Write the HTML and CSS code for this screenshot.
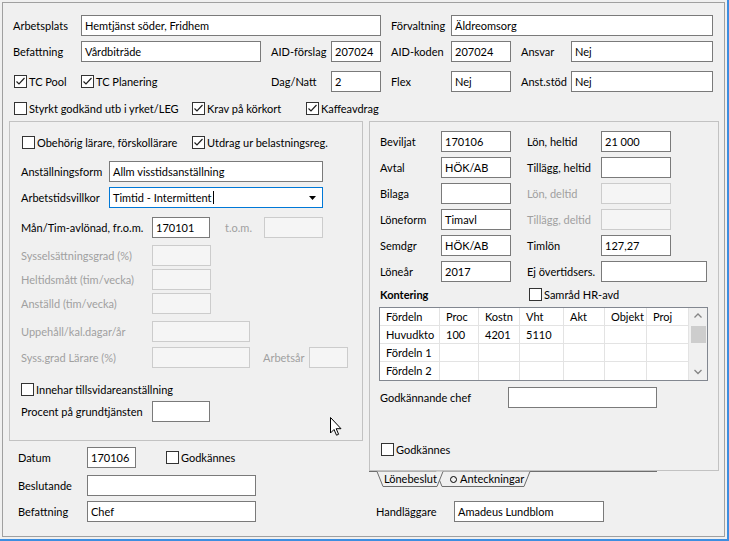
FILE: index.html
```html
<!DOCTYPE html>
<html lang="sv">
<head>
<meta charset="utf-8">
<title>Lönebeslut</title>
<link rel="stylesheet" href="styles.css">
</head>
<body>
<div class="window">
<div class="frame">
  <div class="top">
    <div class="row">
      <span class="lbl lw68">Arbetsplats</span>
      <div class="tb w300">Hemtjänst söder, Fridhem</div>
      <span class="lbl lw60 ml10">Förvaltning</span>
      <div class="tb w262">Äldreomsorg</div>
    </div>
    <div class="row mt5">
      <span class="lbl lw68">Befattning</span>
      <div class="tb w180">Vårdbiträde</div>
      <span class="lbl lw60 ml10">AID-förslag</span>
      <div class="tb w50">207024</div>
      <span class="lbl lw60 ml10">AID-koden</span>
      <div class="tb w60">207024</div>
      <span class="lbl lw50 ml10">Ansvar</span>
      <div class="tb w142">Nej</div>
    </div>
    <div class="row mt9">
      <label class="chk ml1 cw67"><span class="box"><svg viewBox="0 0 11 11" width="11" height="11"><path d="M1.5 5.5 L4 8 L9.5 2"/></svg></span>TC Pool</label>
      <label class="chk cw190"><span class="box"><svg viewBox="0 0 11 11" width="11" height="11"><path d="M1.5 5.5 L4 8 L9.5 2"/></svg></span>TC Planering</label>
      <span class="lbl lw60">Dag/Natt</span>
      <div class="tb w50">2</div>
      <span class="lbl lw60 ml10">Flex</span>
      <div class="tb w60">Nej</div>
      <span class="lbl lw50 ml10">Anst.stöd</span>
      <div class="tb w142">Nej</div>
    </div>
    <div class="row mt6">
      <label class="chk ml1 cw178"><span class="box"></span>Styrkt godkänd utb i yrket/LEG</label>
      <label class="chk cw114"><span class="box"><svg viewBox="0 0 11 11" width="11" height="11"><path d="M1.5 5.5 L4 8 L9.5 2"/></svg></span>Krav på körkort</label>
      <label class="chk"><span class="box"><svg viewBox="0 0 11 11" width="11" height="11"><path d="M1.5 5.5 L4 8 L9.5 2"/></svg></span>Kaffeavdrag</label>
    </div>
  </div>

  <div class="main">
    <div class="lcol">
      <div class="lpanel">
        <div class="row">
          <label class="chk ml1 cw170"><span class="box"></span>Obehörig lärare, förskollärare</label>
          <label class="chk"><span class="box"><svg viewBox="0 0 11 11" width="11" height="11"><path d="M1.5 5.5 L4 8 L9.5 2"/></svg></span>Utdrag ur belastningsreg.</label>
        </div>
        <div class="row mt8">
          <span class="lbl lw88">Anställningsform</span>
          <div class="tb w214">Allm visstidsanställning</div>
        </div>
        <div class="row mt5">
          <span class="lbl lw88">Arbetstidsvillkor</span>
          <div class="combo w214">
            <span>Timtid - Intermittent</span><span class="caret"></span>
            <svg class="drop" viewBox="0 0 7 4" width="7" height="4"><polygon points="0,0 7,0 3.5,4"/></svg>
          </div>
        </div>
        <div class="row mt9">
          <span class="lbl lw131">Mån/Tim-avlönad, fr.o.m.</span>
          <div class="tb w58">170101</div>
          <span class="lbl dis lw39 ml15">t.o.m.</span>
          <div class="tb dis w59"></div>
        </div>
        <div class="row mt7">
          <span class="lbl dis lw131">Sysselsättningsgrad (%)</span>
          <div class="tb dis w59"></div>
        </div>
        <div class="row mt3">
          <span class="lbl dis lw131">Heltidsmått (tim/vecka)</span>
          <div class="tb dis w59"></div>
        </div>
        <div class="row mt3">
          <span class="lbl dis lw131">Anställd (tim/vecka)</span>
          <div class="tb dis w59"></div>
        </div>
        <div class="row mt7">
          <span class="lbl dis lw131">Uppehåll/kal.dagar/år</span>
          <div class="tb dis w98"></div>
        </div>
        <div class="row mt5">
          <span class="lbl dis lw131">Syss.grad Lärare (%)</span>
          <div class="tb dis w98"></div>
          <span class="lbl dis lw46 ml13">Arbetsår</span>
          <div class="tb dis w39"></div>
        </div>
        <div class="row mt11">
          <label class="chk"><span class="box"></span>Innehar tillsvidareanställning</label>
        </div>
        <div class="row mt1">
          <span class="lbl lw131">Procent på grundtjänsten</span>
          <div class="tb w58"></div>
        </div>
        <svg class="cursor" viewBox="0 0 12 19" width="12" height="19"><path d="M0.5 0.5 L0.5 16 L4 12.5 L6.5 18.2 L8.6 17.3 L6.2 11.7 L11 11.7 Z"/></svg>
      </div>
      <div class="lform">
        <div class="row mt6">
          <span class="lbl lw69">Datum</span>
          <div class="tb w49">170106</div>
          <label class="chk ml30"><span class="box"></span>Godkännes</label>
        </div>
        <div class="row mt7">
          <span class="lbl lw69">Beslutande</span>
          <div class="tb w169"></div>
        </div>
        <div class="row mt5">
          <span class="lbl lw69">Befattning</span>
          <div class="tb w169">Chef</div>
        </div>
      </div>
    </div>

    <div class="rcol">
      <div class="page">
        <div class="row">
          <span class="lbl lw61">Beviljat</span>
          <div class="tb w70">170106</div>
          <span class="lbl lw74 ml16">Lön, heltid</span>
          <div class="tb w70">21 000</div>
        </div>
        <div class="row mt5">
          <span class="lbl lw61">Avtal</span>
          <div class="tb w70">HÖK/AB</div>
          <span class="lbl lw74 ml16">Tillägg, heltid</span>
          <div class="tb w70"></div>
        </div>
        <div class="row mt5">
          <span class="lbl lw61">Bilaga</span>
          <div class="tb w70"></div>
          <span class="lbl dis lw74 ml16">Lön, deltid</span>
          <div class="tb dis w70"></div>
        </div>
        <div class="row mt5">
          <span class="lbl lw61">Löneform</span>
          <div class="tb w70">Timavl</div>
          <span class="lbl dis lw74 ml16">Tillägg, deltid</span>
          <div class="tb dis w70"></div>
        </div>
        <div class="row mt5">
          <span class="lbl lw61">Semdgr</span>
          <div class="tb w70">HÖK/AB</div>
          <span class="lbl lw74 ml16">Timlön</span>
          <div class="tb w70">127,27</div>
        </div>
        <div class="row mt5">
          <span class="lbl lw61">Löneår</span>
          <div class="tb w70">2017</div>
          <span class="lbl lw74 ml16">Ej övertidsers.</span>
          <div class="tb w106"></div>
        </div>
        <div class="row mt2">
          <span class="lbl bold lw149">Kontering</span>
          <label class="chk"><span class="box"></span>Samråd HR-avd</label>
        </div>
        <div class="grid mt2">
          <div class="c">Fördeln</div><div class="c">Proc</div><div class="c">Kostn</div><div class="c">Vht</div><div class="c">Akt</div><div class="c">Objekt</div><div class="c">Proj</div>
          <div class="sb">
            <svg class="sbbtn" viewBox="0 0 18 17" width="18" height="17"><polyline points="5.5,9.5 9,6 12.5,9.5"/></svg>
            <div class="thumb"></div>
            <div class="sbspace"></div>
            <svg class="sbbtn" viewBox="0 0 18 17" width="18" height="17"><polyline points="5.5,7 9,10.5 12.5,7"/></svg>
          </div>
          <div class="c">Huvudkto</div><div class="c">100</div><div class="c">4201</div><div class="c">5110</div><div class="c"></div><div class="c"></div><div class="c"></div>
          <div class="c">Fördeln 1</div><div class="c"></div><div class="c"></div><div class="c"></div><div class="c"></div><div class="c"></div><div class="c"></div>
          <div class="c last">Fördeln 2</div><div class="c last"></div><div class="c last"></div><div class="c last"></div><div class="c last"></div><div class="c last"></div><div class="c last"></div>
        </div>
        <div class="row mt6">
          <span class="lbl lw128">Godkännande chef</span>
          <div class="tb w149"></div>
        </div>
        <div class="row mt31">
          <label class="chk ml1"><span class="box"></span>Godkännes</label>
        </div>
      </div>
      <div class="tabs">
        <svg viewBox="0 0 300 18" width="300" height="18">
          <line class="strip" x1="0" y1="0.5" x2="288" y2="0.5"/>
          <path class="tab" d="M67 0.5 L73 15.5 L155 15.5 L161 0.5"/>
          <path class="tab" d="M8 0.5 L14 15.5 L68 15.5 L74 0.5"/>
          <text x="15" y="12">Lönebeslut</text>
          <circle cx="84.5" cy="8.5" r="3"/>
          <text x="91" y="12">Anteckningar</text>
        </svg>
      </div>
      <div class="row hrow">
        <span class="lbl lw78">Handläggare</span>
        <div class="tb w150">Amadeus Lundblom</div>
      </div>
    </div>
  </div>
</div>
</div>
</body>
</html>
```
FILE: styles.css
```css
html, body {
  margin: 0;
  padding: 0;
}
body {
  width: 729px;
  height: 541px;
  overflow: hidden;
  background: #f0f0f0;
  font-family: Lato, "Liberation Sans", sans-serif;
  font-size: 11px;
  color: #000;
}
.window {
  box-sizing: border-box;
  width: 729px;
  height: 541px;
  padding: 2px;
  border-right: 2px solid #3d8ee0;
  border-bottom: 2px solid #3d8ee0;
}
.frame {
  box-sizing: border-box;
  height: 100%;
  border: 1px solid #a0a0a0;
}
.top {
  padding: 12px 0 0 10px;
}
.row {
  display: flex;
  align-items: center;
  height: 21px;
}
.lbl {
  flex: none;
  white-space: nowrap;
}
.lbl.dis { color: #a0a0a0; }
.bold { font-weight: bold; }
.tb {
  flex: none;
  box-sizing: border-box;
  height: 21px;
  border: 1px solid #7a7a7a;
  background: #fff;
  padding-left: 3px;
  line-height: 19px;
  white-space: nowrap;
  overflow: hidden;
}
.tb.dis {
  border-color: #cccccc;
  background: #f5f5f5;
}
.combo {
  flex: none;
  box-sizing: border-box;
  height: 21px;
  border: 1px solid #0078d7;
  background: #fff;
  padding-left: 3px;
  display: flex;
  align-items: center;
  white-space: nowrap;
}
.caret {
  display: inline-block;
  width: 1px;
  height: 13px;
  background: #000;
  margin-left: 1px;
}
.drop {
  margin-left: auto;
  margin-right: 6px;
  fill: #000;
}
.chk {
  display: flex;
  align-items: center;
  flex: none;
  white-space: nowrap;
}
.box {
  box-sizing: border-box;
  width: 13px;
  height: 13px;
  border: 1px solid #333;
  background: #fff;
  margin-right: 2px;
  display: flex;
  flex: none;
}
.box svg { display: block; }
.box path {
  fill: none;
  stroke: #1f1f1f;
  stroke-width: 1.2;
}

/* widths */
.lw39 { width: 39px; } .lw46 { width: 46px; } .lw50 { width: 50px; }
.lw60 { width: 60px; } .lw61 { width: 61px; } .lw68 { width: 68px; }
.lw69 { width: 69px; } .lw74 { width: 74px; } .lw78 { width: 78px; }
.lw88 { width: 88px; } .lw128 { width: 128px; } .lw131 { width: 131px; }
.lw149 { width: 149px; }
.w39 { width: 39px; } .w49 { width: 49px; } .w50 { width: 50px; }
.w58 { width: 58px; } .w59 { width: 59px; } .w60 { width: 60px; }
.w70 { width: 70px; } .w98 { width: 98px; } .w106 { width: 106px; }
.w142 { width: 142px; } .w149 { width: 149px; } .w150 { width: 150px; }
.w169 { width: 169px; } .w180 { width: 180px; } .w214 { width: 214px; }
.w262 { width: 262px; } .w300 { width: 300px; }
.cw67 { width: 67px; } .cw114 { width: 114px; } .cw170 { width: 170px; }
.cw178 { width: 178px; } .cw190 { width: 190px; }
.mt1 { margin-top: 1px; } .mt2 { margin-top: 2px; } .mt3 { margin-top: 3px; }
.mt5 { margin-top: 5px; } .mt6 { margin-top: 6px; } .mt7 { margin-top: 7px; }
.mt8 { margin-top: 8px; } .mt9 { margin-top: 9px; } .mt11 { margin-top: 11px; }
.mt31 { margin-top: 31px; }
.ml1 { margin-left: 1px; } .ml10 { margin-left: 10px; } .ml13 { margin-left: 13px; }
.ml15 { margin-left: 15px; } .ml16 { margin-left: 16px; } .ml30 { margin-left: 30px; }

/* main area */
.main {
  display: flex;
  gap: 6px;
  margin: 2px 0 0 6px;
}
.lcol {
  width: 354px;
  flex: none;
}
.lpanel {
  position: relative;
  box-sizing: border-box;
  width: 354px;
  height: 320px;
  border: 1px solid #c2c2c2;
  padding: 10px 0 0 11px;
}
.cursor {
  position: absolute;
  left: 320px;
  top: 295px;
  fill: #fff;
  stroke: #000;
  stroke-width: 1;
}
.lform {
  padding-left: 9px;
}
.rcol {
  width: 350px;
  flex: none;
}
.page {
  box-sizing: border-box;
  width: 350px;
  height: 350px;
  border: 1px solid #c2c2c2;
  padding: 9px 0 0 10px;
}
.grid {
  display: grid;
  grid-template-columns: 60px 39px 41px 44px 41px 42px 42px 18px;
  grid-template-rows: repeat(4, 18px);
  box-sizing: border-box;
  width: 329px;
  height: 74px;
  margin-left: -1px;
  border: 1px solid #828790;
  background: #fff;
}
.c {
  box-sizing: border-box;
  border-right: 1px solid #e3e3e3;
  border-bottom: 1px solid #e3e3e3;
  padding-left: 6px;
  line-height: 17px;
  white-space: nowrap;
  overflow: hidden;
}
.c.last { border-bottom: none; }
.sb {
  grid-column: 8;
  grid-row: 1 / span 4;
  background: #f0f0f0;
  display: flex;
  flex-direction: column;
}
.sbbtn {
  display: block;
  flex: none;
  fill: none;
  stroke: #858585;
  stroke-width: 1.3;
}
.thumb {
  height: 17px;
  margin: 1px 1px 0 2px;
  background: #cdcdcd;
  flex: none;
}
.sbspace { flex: 1; }
.tabs {
  height: 16px;
}
.tabs svg {
  display: block;
  overflow: visible;
}
.tabs .strip {
  stroke: #6e6e6e;
  stroke-width: 1;
}
.tabs .tab {
  fill: #f0f0f0;
  stroke: #6e6e6e;
  stroke-width: 1;
}
.tabs text {
  font-family: Lato, "Liberation Sans", sans-serif;
  font-size: 11px;
  fill: #000;
}
.tabs circle {
  fill: none;
  stroke: #000;
  stroke-width: 1;
}
.hrow {
  margin-top: 14px;
  padding-left: 7px;
}
```
